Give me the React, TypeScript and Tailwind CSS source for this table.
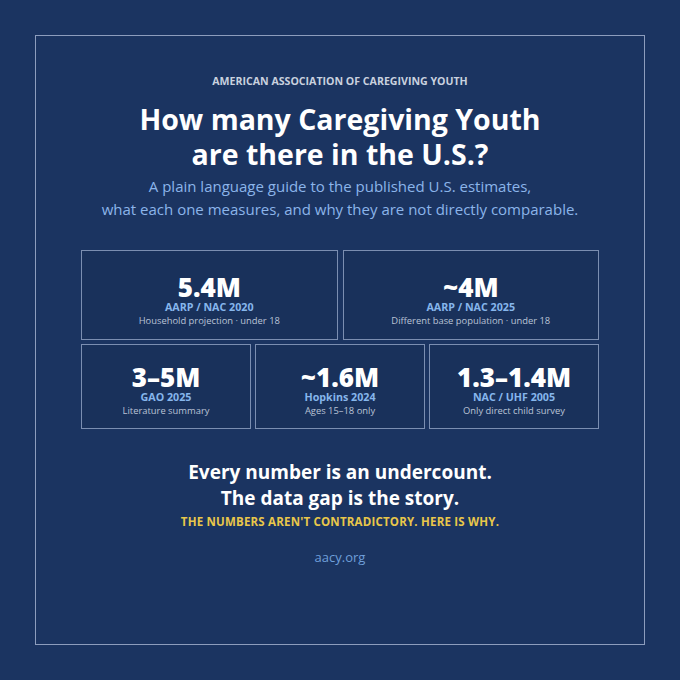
const font = { fontFamily: '"Open Sans", "Noto Sans", sans-serif' };

type Stat = { value: string; source: string; note: string };

const topStats: Stat[] = [
  { value: "5.4M", source: "AARP / NAC 2020", note: "Household projection · under 18" },
  { value: "~4M", source: "AARP / NAC 2025", note: "Different base population · under 18" },
];

const bottomStats: Stat[] = [
  { value: "3–5M", source: "GAO 2025", note: "Literature summary" },
  { value: "~1.6M", source: "Hopkins 2024", note: "Ages 15–18 only" },
  { value: "1.3–1.4M", source: "NAC / UHF 2005", note: "Only direct child survey" },
];

function StatCard({ stat, tall }: { stat: Stat; tall?: boolean }) {
  return (
    <div
      className={
        "flex flex-col items-center border border-[#7b8eb1] bg-[#19315b] " +
        (tall ? "h-[90px] pt-[23px]" : "h-[85px] pt-[19px]")
      }
    >
      <div className="text-[26px] font-extrabold leading-[27px] text-white">{stat.value}</div>
      <div className="text-[10.7px] font-bold leading-[12px] text-[#86b6ec]">{stat.source}</div>
      <div className="mt-[1px] text-[9.4px] leading-[13px] text-[#b9c3d6]">{stat.note}</div>
    </div>
  );
}

export default function App() {
  return (
    <div className="h-[680px] w-[680px] bg-[#1b3461] p-[35px]" style={font}>
      <div className="flex h-[610px] w-[610px] flex-col items-center border-[1.5px] border-[#8d9dbd] pt-[38px]">
        <p className="text-[10.6px] font-bold leading-[14px] text-[#c9d1df]">
          AMERICAN ASSOCIATION OF CAREGIVING YOUTH
        </p>

        <h1 className="mt-[14px] text-center text-[28.5px] font-bold leading-[35px] text-white">
          How many Caregiving Youth
          <br />
          are there in the U.S.?
        </h1>

        <p className="mt-[3px] text-center text-[15px] leading-[23px] text-[#8cb5ea]">
          A plain language guide to the published U.S. estimates,
          <br />
          what each one measures, and why they are not directly comparable.
        </p>

        <div className="mt-[29px] flex w-[518px] flex-col gap-[4px]">
          <div className="grid grid-cols-2 gap-[5px]">
            {topStats.map((s) => (
              <StatCard key={s.value} stat={s} tall />
            ))}
          </div>
          <div className="grid grid-cols-3 gap-[4px]">
            {bottomStats.map((s) => (
              <StatCard key={s.value} stat={s} />
            ))}
          </div>
        </div>

        <p className="mt-[30px] text-center text-[19px] font-bold leading-[26px] text-white">
          Every number is an undercount.
          <br />
          The data gap is the story.
        </p>
        <p className="mt-[4px] text-[11.5px] font-bold leading-[14px] tracking-[0.2px] text-[#e9c74a]">
          THE NUMBERS AREN'T CONTRADICTORY. HERE IS WHY.
        </p>

        <p className="mt-[19px] text-[13px] leading-[18px] text-[#6f9fd9]">aacy.org</p>
      </div>
    </div>
  );
}
